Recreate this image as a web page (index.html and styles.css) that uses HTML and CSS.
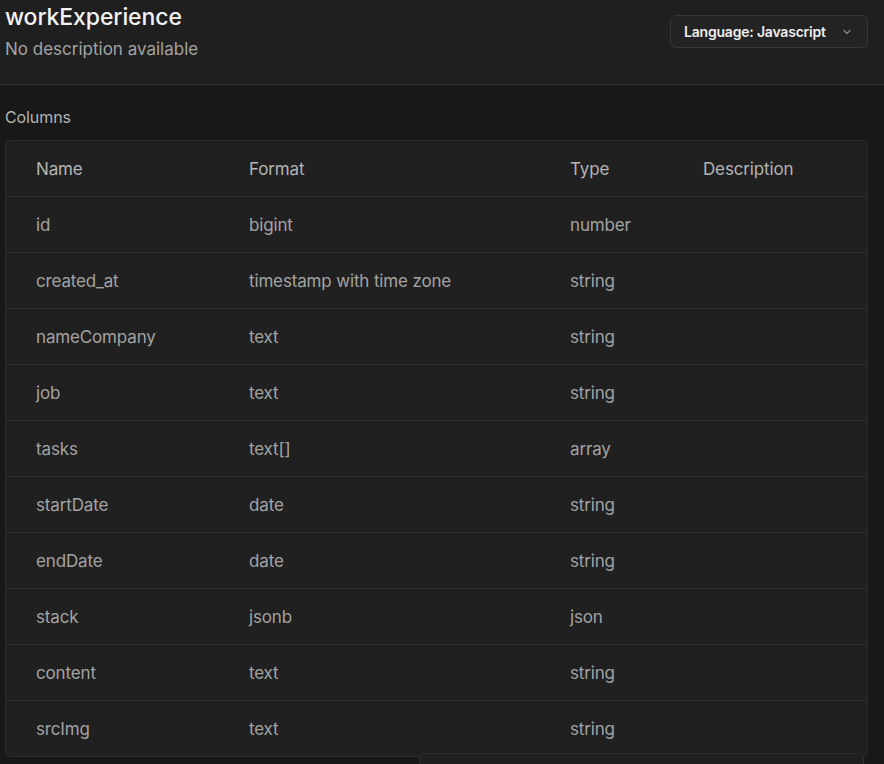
FILE: index.html
```html
<!DOCTYPE html>
<html>
<head>
<meta charset="utf-8">
<link rel="stylesheet" href="styles.css">
</head>
<body>
<header class="top">
  <div class="titles">
    <h1 class="title">workExperience</h1>
    <p class="subtitle">No description available</p>
  </div>
  <button class="lang">Language: Javascript
    <svg class="chev" width="12" height="12" viewBox="0 0 12 12"><path d="M3 4.5 L6 7.5 L9 4.5" fill="none" stroke="#8a8a8a" stroke-width="1.2" stroke-linecap="round" stroke-linejoin="round"/></svg>
  </button>
</header>
<main class="content">
  <div class="section-label">Columns</div>
  <div class="table">
    <div class="row head"><span>Name</span><span>Format</span><span>Type</span><span>Description</span></div>
    <div class="row"><span>id</span><span>bigint</span><span>number</span><span></span></div>
    <div class="row"><span>created_at</span><span>timestamp with time zone</span><span>string</span><span></span></div>
    <div class="row"><span>nameCompany</span><span>text</span><span>string</span><span></span></div>
    <div class="row"><span>job</span><span>text</span><span>string</span><span></span></div>
    <div class="row"><span>tasks</span><span>text[]</span><span>array</span><span></span></div>
    <div class="row"><span>startDate</span><span>date</span><span>string</span><span></span></div>
    <div class="row"><span>endDate</span><span>date</span><span>string</span><span></span></div>
    <div class="row"><span>stack</span><span>jsonb</span><span>json</span><span></span></div>
    <div class="row"><span>content</span><span>text</span><span>string</span><span></span></div>
    <div class="row"><span>srcImg</span><span>text</span><span>string</span><span></span></div>
  </div>
</main>
<div class="floating"></div>
</body>
</html>
```
FILE: styles.css
```css
html, body {
  margin: 0;
  padding: 0;
  background: #181818;
  font-family: Inter, "Noto Sans", sans-serif;
  height: 764px;
  overflow: hidden;
}
.top {
  background: #1f1f1f;
  border-bottom: 1px solid #2e2e2e;
  height: 85px;
  box-sizing: border-box;
  display: flex;
  justify-content: space-between;
  align-items: flex-start;
  padding: 0 16px 0 5px;
}
.title {
  margin: 3px 0 0 0;
  font-size: 23px;
  font-weight: 500;
  color: #f2f2f2;
  letter-spacing: -0.1px;
  line-height: 28px;
}
.subtitle {
  margin: 8px 0 0 0;
  font-size: 17px;
  color: #a3a3a3;
  line-height: 20px;
  letter-spacing: 0;
}
.lang {
  margin-top: 15px;
  height: 33px;
  width: 198px;
  box-sizing: border-box;
  background: #232323;
  border: 1px solid #363636;
  border-radius: 6px;
  color: #ededed;
  font-family: inherit;
  font-size: 14px;
  font-weight: 600;
  letter-spacing: -0.2px;
  display: flex;
  align-items: center;
  justify-content: space-between;
  padding: 0 14px 0 13px;
}
.chev { display: block; }
.content {
  padding: 22px 16px 0 5px;
}
.section-label {
  font-size: 16px;
  color: #b4b4b4;
  line-height: 20px;
  letter-spacing: -0.1px;
  margin-bottom: 13px;
}
.table {
  background: #202020;
  border: 1px solid #2c2c2c;
  border-radius: 5px;
}
.row {
  display: grid;
  grid-template-columns: 213px 321px 133px 1fr;
  height: 56px;
  align-items: center;
  padding-left: 30px;
  border-top: 1px solid #2c2c2c;
  box-sizing: border-box;
  font-size: 17px;
  color: #a3a3a3;
  letter-spacing: -0.15px;
}
.row.head {
  border-top: none;
  height: 55px;
  color: #b4b4b4;
}
.floating {
  position: absolute;
  left: 419px;
  top: 753px;
  width: 443px;
  height: 40px;
  background: #202020;
  border: 1px solid #2e2e2e;
  border-radius: 6px;
}
```
